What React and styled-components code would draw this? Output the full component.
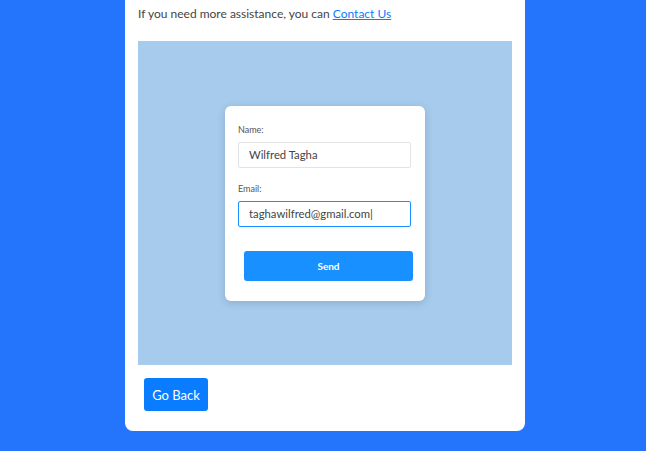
import React from "react";
import styled, { createGlobalStyle } from "styled-components";

const GlobalStyle = createGlobalStyle`
  html, body {
    margin: 0;
    padding: 0;
    background: #2575fc;
    font-family: Lato, "Open Sans", sans-serif;
    overflow: hidden;
  }
`;

const Page = styled.div`
  display: flex;
  justify-content: center;
  height: 451px;
  padding-left: 4px;
`;

const Card = styled.div`
  box-sizing: border-box;
  width: 400px;
  margin-top: -18px;
  align-self: flex-start;
  background: #fff;
  border-radius: 8px;
  padding: 23px 13px 20px;
  display: flex;
  flex-direction: column;
`;

const Note = styled.p`
  margin: 0 0 18px;
  font-size: 12px;
  line-height: 18px;
  color: #444;
`;

const Link = styled.a`
  color: #0a7cff;
  text-decoration: underline;
`;

const Stage = styled.div`
  height: 324px;
  background: #a6cbec;
  display: flex;
  align-items: center;
  justify-content: center;
`;

const FormCard = styled.form`
  box-sizing: border-box;
  width: 200px;
  height: 195px;
  margin-top: 0;
  background: #fff;
  border-radius: 6px;
  box-shadow: 0 2px 8px rgba(0, 0, 0, 0.15);
  padding: 18px 14px 0 13px;
  display: flex;
  flex-direction: column;
`;

const Label = styled.label`
  font-size: 9px;
  line-height: 12px;
  color: #555;
  margin-bottom: 6px;
`;

const Input = styled.input`
  box-sizing: border-box;
  width: 173px;
  height: 26px;
  padding: 0 10px;
  margin-bottom: 15px;
  font-family: inherit;
  font-size: 11.3px;
  color: #444;
  border: 1px solid ${(p) => (p.$focus ? "#1890ff" : "#e3e3e3")};
  border-radius: 2px;
  outline: none;
  background: #fff;
`;

const Send = styled.button`
  box-sizing: border-box;
  width: 169px;
  height: 30px;
  margin: 9px 0 0 6px;
  border: none;
  border-radius: 3px;
  background: #1890ff;
  color: #fff;
  font-family: inherit;
  font-size: 10px;
  font-weight: 700;
`;

const Back = styled.button`
  align-self: flex-start;
  margin: 13px 0 0 6px;
  width: 64px;
  height: 33px;
  border: none;
  border-radius: 3px;
  background: #0a7cff;
  color: #fff;
  font-family: inherit;
  font-size: 13px;
`;

export default function App() {
  return (
    <Page>
      <GlobalStyle />
      <Card>
        <Note>
          If you need more assistance, you can <Link href="#">Contact Us</Link>
        </Note>
        <Stage>
          <FormCard>
            <Label>Name:</Label>
            <Input defaultValue="Wilfred Tagha" />
            <Label>Email:</Label>
            <Input $focus defaultValue="taghawilfred@gmail.com|" />
            <Send type="button">Send</Send>
          </FormCard>
        </Stage>
        <Back>Go Back</Back>
      </Card>
    </Page>
  );
}
